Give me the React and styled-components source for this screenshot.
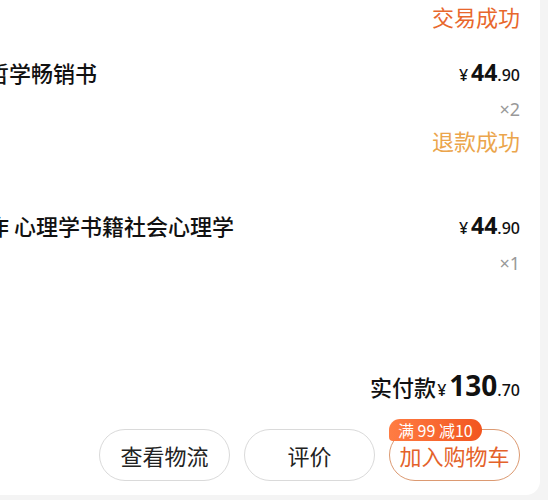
import React from 'react';
import styled, { createGlobalStyle } from 'styled-components';

const GlobalStyle = createGlobalStyle`
  html, body {
    margin: 0;
    padding: 0;
    background: #f4f4f4;
  }
  body {
    font-family: "Noto Sans CJK SC", "Noto Sans", sans-serif;
    width: 548px;
    height: 500px;
    overflow: hidden;
  }
`;

const Viewport = styled.div`
  width: 548px;
  height: 500px;
  overflow: hidden;
`;

// the card is wider than the view; its left side (pictures) is cut off
const Card = styled.div`
  width: 722px;
  margin-left: -182px;
  background: #fff;
  border-radius: 0 0 14px 0;
  padding: 1px 20px 14px 16px;
  box-sizing: border-box;
  display: flex;
  flex-direction: column;
`;

const Status = styled.div`
  align-self: flex-end;
  font-size: 22px;
  line-height: ${p => p.lh || 30}px;
  color: ${p => p.color};
`;

const Item = styled.div`
  display: flex;
  align-items: flex-start;
  margin-top: ${p => p.top}px;
`;

const Thumb = styled.div`
  width: 80px;
  height: 60px;
  border-radius: 8px;
  background: #eee;
  margin-right: 7px;
  flex-shrink: 0;
`;

const Title = styled.div`
  flex: 1;
  font-size: 22px;
  line-height: 30px;
  font-weight: 500;
  color: #111;
  white-space: nowrap;
`;

const Side = styled.div`
  display: flex;
  flex-direction: column;
  align-items: flex-end;
  gap: ${p => p.gap || 5}px;
  margin-left: 16px;
`;

const Price = styled.div`
  line-height: 30px;
  color: #111;
  white-space: nowrap;
  font-family: "Noto Sans", "Noto Sans CJK SC", sans-serif;
`;

const Yen = styled.span`
  font-size: ${p => p.size || 16}px;
  font-weight: 500;
  margin-right: 3px;
`;

const Int = styled.span`
  font-size: ${p => p.size || 23}px;
  font-weight: 700;
`;

const Dec = styled.span`
  font-size: ${p => p.size || 16}px;
  font-weight: 500;
`;

const Qty = styled.div`
  font-size: 18px;
  line-height: 30px;
  color: #999;
  font-family: "Noto Sans", sans-serif;
`;

const Total = styled.div`
  align-self: flex-end;
  margin-top: 91px;
  line-height: 34px;
  display: flex;
  align-items: baseline;
  gap: 1px;
`;

const TotalLabel = styled.span`
  font-size: 22px;
  font-weight: 500;
  color: #111;
`;

const Actions = styled.div`
  align-self: flex-end;
  display: flex;
  gap: 14px;
  margin-top: 24px;
`;

const Button = styled.button`
  position: relative;
  width: 131px;
  height: 52px;
  border-radius: 26px;
  background: #fff;
  border: 1px solid ${p => (p.primary ? '#dc9a72' : '#dadada')};
  color: ${p => (p.primary ? '#e4622a' : '#222')};
  font-family: "Noto Sans CJK SC", sans-serif;
  font-size: 22px;
  padding: 0;
  cursor: pointer;
`;

const Badge = styled.span`
  position: absolute;
  top: -11px;
  left: -1px;
  height: 22px;
  padding: 0 9px;
  border-radius: 11px 11px 11px 4px;
  background: linear-gradient(90deg, #ff7c43, #f2551f);
  color: #fff;
  font-size: 16px;
  line-height: 22px;
  white-space: nowrap;
`;

export default function App() {
  return (
    <Viewport>
      <GlobalStyle />
      <Card>
        <Status color="#e8672c">交易成功</Status>

        <Item top={26}>
          <Thumb />
          <Title>人生观哲学畅销书</Title>
          <Side gap={4}>
            <Price>
              <Yen>¥</Yen>
              <Int>44</Int>
              <Dec>.90</Dec>
            </Price>
            <Qty>×2</Qty>
            <Status color="#eba54c" lh={24}>退款成功</Status>
          </Side>
        </Item>

        <Item top={58}>
          <Thumb />
          <Title>阿伦森作 心理学书籍社会心理学</Title>
          <Side gap={5}>
            <Price>
              <Yen>¥</Yen>
              <Int>44</Int>
              <Dec>.90</Dec>
            </Price>
            <Qty>×1</Qty>
          </Side>
        </Item>

        <Total>
          <TotalLabel>实付款</TotalLabel>
          <Price>
            <Yen size={16}>¥</Yen>
            <Int size={28}>130</Int>
            <Dec size={16}>.70</Dec>
          </Price>
        </Total>

        <Actions>
          <Button>查看物流</Button>
          <Button>评价</Button>
          <Button primary>
            <Badge>满 99 减10</Badge>
            加入购物车
          </Button>
        </Actions>
      </Card>
    </Viewport>
  );
}
